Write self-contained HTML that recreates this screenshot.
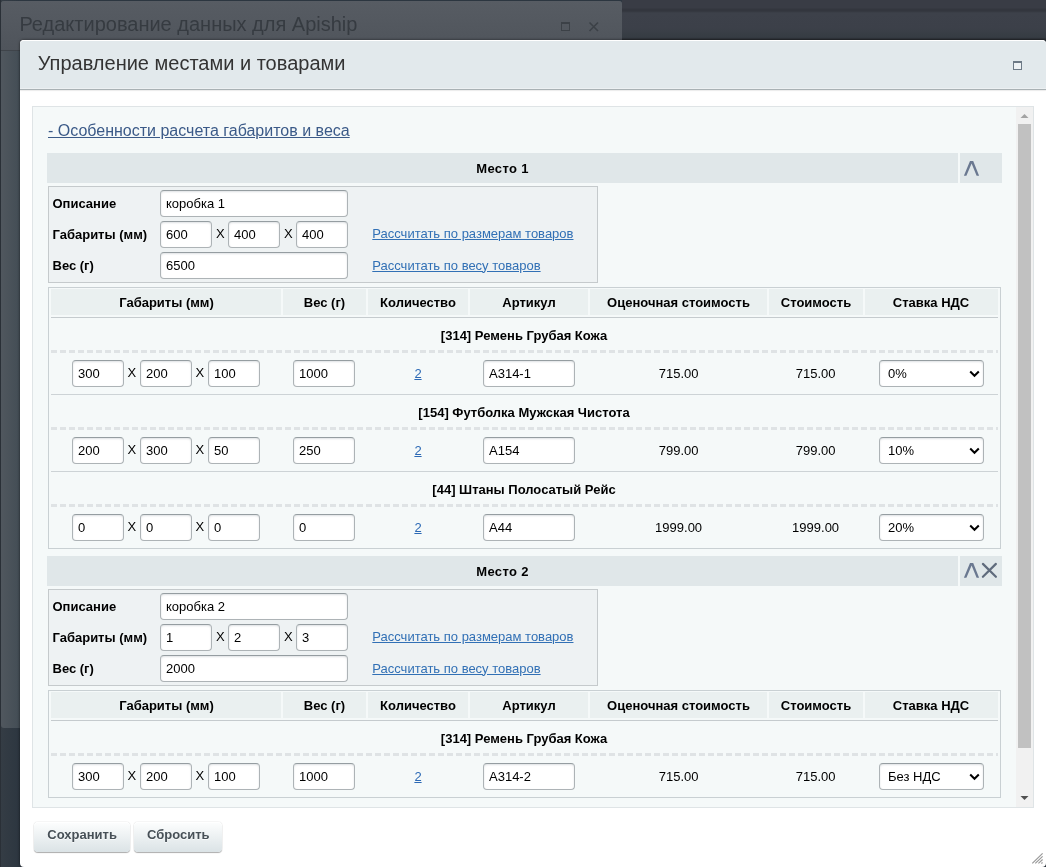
<!DOCTYPE html>
<html><head><meta charset="utf-8"><title>Управление местами и товарами</title>
<style>
*{margin:0;padding:0;box-sizing:border-box}
html,body{width:1046px;height:867px;overflow:hidden}
body{background:linear-gradient(90deg,#353d45,#2c3640 20px,#2c3640);font-family:"Liberation Sans",sans-serif;position:relative}
.abs{position:absolute}
.t{position:absolute;white-space:nowrap;line-height:1}
.b{font-weight:bold}
.inp{position:absolute;background:#fff;border:1px solid #adb3b6;border-top-color:#959da1;border-radius:4px;box-shadow:inset 0 1px 2px rgba(160,170,175,.35)}
.inp span{position:absolute;left:5px;font-size:13px;color:#000;line-height:1;white-space:nowrap}
.lnk{color:#2c69b5;text-decoration:underline}
.hdr{position:absolute;background:#e0e7e9}
.th{position:absolute;background:#e9eef0}
.dash{position:absolute;height:3px;background:repeating-linear-gradient(90deg,#dfe3e5 0 6px,transparent 6px 9px)}
.sep{position:absolute;height:1px;background:#cbd1d4}
.btn{position:absolute;border-radius:4px;background:linear-gradient(#fdfefe,#dbe3e6);box-shadow:0 0 1px rgba(0,0,0,.35),0 1px 1px rgba(0,0,0,.3),inset 0 1px 0 #fff}
.btn span{position:absolute;font-size:13px;font-weight:bold;color:#475057;text-shadow:0 1px rgba(255,255,255,.7);line-height:1;white-space:nowrap}
</style></head>
<body><div id="root" style="position:absolute;left:0;top:0;width:1046px;height:867px;will-change:transform">
<div class="abs" style="left:622px;top:0px;width:424px;height:40px;background:linear-gradient(#393c45 0,#393c45 8px,#33363e 9px,#33363e 11px,#3d414a 13px,#3c4049 28px,#383e45 34px,#363c43 38px,#2a2e33 39px,#2a2e33 40px)"></div>
<div class="abs" style="left:0px;top:0px;width:1px;height:867px;background:#2a3037"></div>
<div class="abs" style="left:1px;top:1px;width:621px;height:727px;background:linear-gradient(90deg,#50575e,#434d55 19px,#434d55);border-radius:3px;overflow:hidden"></div>
<div class="abs" style="left:1px;top:1px;width:621px;height:49px;background:linear-gradient(#575c63,#4f545b);border-radius:3px 3px 0 0"></div>
<div class="abs" style="left:1px;top:50px;width:621px;height:1px;background:#3f444a"></div>
<div class="t" style="left:19.4px;top:13.57px;font-size:20px;color:#363b41;">Редактирование данных для Apiship</div>
<svg class="abs" style="left:560px;top:21px" width="12" height="12"><rect x="1.5" y="1.5" width="8" height="8" fill="none" stroke="#3c4147" stroke-width="1"/><rect x="1" y="1" width="9" height="2" fill="#3c4147"/></svg>
<svg class="abs" style="left:588px;top:21px" width="12" height="12"><path d="M1.5 1.5L10 10M10 1.5L1.5 10" stroke="#3c4147" stroke-width="1.6"/></svg>
<div class="abs" style="left:20px;top:40px;width:1026px;height:827px;background:#fff;border-radius:4px;box-shadow:0 0 3px rgba(0,0,0,.6)"></div>
<div class="abs" style="left:20px;top:40px;width:1026px;height:50px;background:#e2e9ec;border-radius:4px 4px 0 0;border-top:1px solid #fff;border-bottom:1px solid #a9b1b4;box-shadow:0 1px 1px rgba(0,0,0,.08),inset 0 -1px 0 rgba(255,255,255,.35)"></div>
<div class="t" style="left:37.8px;top:52.67px;font-size:20px;color:#333;">Управление местами и товарами</div>
<svg class="abs" style="left:1013px;top:61px" width="9" height="9"><rect x="0.5" y="0.5" width="8" height="8" fill="#eef2f4" stroke="#6d7a86" stroke-width="1"/><rect x="0" y="0" width="9" height="2" fill="#6d7a86"/></svg>
<div class="abs" style="left:32px;top:106px;width:1002px;height:702px;background:#f5f9f9;border:1px solid #dfe4e6"></div>
<div class="abs" style="left:1016px;top:107px;width:17px;height:700px;background:#f1f1f1"></div>
<div class="abs" style="left:1018px;top:124px;width:13px;height:624px;background:#c1c1c1"></div>
<svg class="abs" style="left:1016px;top:107px" width="17" height="17"><path d="M4.5 11h8l-4-4z" fill="#a3a3a3"/></svg>
<svg class="abs" style="left:1016px;top:790px" width="17" height="17"><path d="M4.5 6h8l-4 4z" fill="#505050"/></svg>
<div class="t" style="left:48px;top:122.96px;font-size:16px;color:#3b5a88;text-decoration:underline;">- Особенности расчета габаритов и веса</div>
<div class="abs" style="left:47px;top:153px;width:911px;height:30px;background:#e0e7e9"></div>
<div class="abs" style="left:960px;top:153px;width:42px;height:30px;background:#e0e7e9"></div>
<div class="t" style="left:402.50px;width:200px;text-align:center;top:162.00px;font-size:13px;color:#000;font-weight:bold;letter-spacing:0.35px;">Место 1</div>
<svg class="abs" style="left:958px;top:156px" width="26" height="24"><path d="M5.9 19.8L12 4.9L15.2 4.9L21.1 19.8L18.6 19.8L13.6 7.5L8.4 19.8Z" fill="#6a7890"/></svg>
<div class="abs" style="left:48px;top:186px;width:550px;height:97px;background:#eef2f3;border:1px solid #c5cacc"></div>
<div class="t" style="left:52.5px;top:197.30px;font-size:13px;color:#000;font-weight:bold;">Описание</div>
<div class="t" style="left:52.5px;top:228.00px;font-size:13px;color:#000;font-weight:bold;">Габариты (мм)</div>
<div class="t" style="left:52.5px;top:259.10px;font-size:13px;color:#000;font-weight:bold;">Вес (г)</div>
<div class="inp" style="left:160px;top:190px;width:188px;height:27px"><span style="top:5.80px">коробка 1</span></div>
<div class="inp" style="left:160px;top:221px;width:52px;height:27px"><span style="top:5.80px">600</span></div>
<div class="t" style="left:216px;top:227.00px;font-size:13px;color:#000;">X</div>
<div class="inp" style="left:228px;top:221px;width:52px;height:27px"><span style="top:5.80px">400</span></div>
<div class="t" style="left:284px;top:227.00px;font-size:13px;color:#000;">X</div>
<div class="inp" style="left:296px;top:221px;width:52px;height:27px"><span style="top:5.80px">400</span></div>
<div class="inp" style="left:160px;top:252px;width:188px;height:27px"><span style="top:5.80px">6500</span></div>
<div class="t" style="left:372.3px;top:227.30px;font-size:13px;color:#3170b5;text-decoration:underline;">Рассчитать по размерам товаров</div>
<div class="t" style="left:372.3px;top:258.50px;font-size:13px;color:#3170b5;text-decoration:underline;">Рассчитать по весу товаров</div>
<div class="abs" style="left:48px;top:287px;width:953px;height:262px;background:#f5f9f9;border:1px solid #c9d0d3"></div>
<div class="abs" style="left:51px;top:289px;width:230px;height:26px;background:#eaf0f0"></div>
<div class="t" style="left:51.00px;width:231px;text-align:center;top:296.00px;font-size:13px;color:#000;font-weight:bold;">Габариты (мм)</div>
<div class="abs" style="left:283px;top:289px;width:83px;height:26px;background:#eaf0f0"></div>
<div class="t" style="left:282.00px;width:85px;text-align:center;top:296.00px;font-size:13px;color:#000;font-weight:bold;">Вес (г)</div>
<div class="abs" style="left:368px;top:289px;width:100px;height:26px;background:#eaf0f0"></div>
<div class="t" style="left:367.00px;width:102px;text-align:center;top:296.00px;font-size:13px;color:#000;font-weight:bold;">Количество</div>
<div class="abs" style="left:470px;top:289px;width:118px;height:26px;background:#eaf0f0"></div>
<div class="t" style="left:469.00px;width:120px;text-align:center;top:296.00px;font-size:13px;color:#000;font-weight:bold;">Артикул</div>
<div class="abs" style="left:590px;top:289px;width:177px;height:26px;background:#eaf0f0"></div>
<div class="t" style="left:589.00px;width:179px;text-align:center;top:296.00px;font-size:13px;color:#000;font-weight:bold;">Оценочная стоимость</div>
<div class="abs" style="left:769px;top:289px;width:94px;height:26px;background:#eaf0f0"></div>
<div class="t" style="left:768.00px;width:96px;text-align:center;top:296.00px;font-size:13px;color:#000;font-weight:bold;">Стоимость</div>
<div class="abs" style="left:865px;top:289px;width:133px;height:26px;background:#eaf0f0"></div>
<div class="t" style="left:864.00px;width:134px;text-align:center;top:296.00px;font-size:13px;color:#000;font-weight:bold;">Ставка НДС</div>
<div class="abs" style="left:51px;top:317px;width:947px;height:1px;background:#c5cbce"></div>
<div class="t" style="left:224.00px;width:600px;text-align:center;top:329.20px;font-size:13px;color:#000;font-weight:bold;">[314] Ремень Грубая Кожа</div>
<div class="dash" style="left:51px;top:350px;width:947px"></div>
<div class="inp" style="left:72px;top:360px;width:52px;height:27px"><span style="top:5.80px">300</span></div>
<div class="t" style="left:127.5px;top:366.00px;font-size:13px;color:#000;">X</div>
<div class="inp" style="left:140px;top:360px;width:52px;height:27px"><span style="top:5.80px">200</span></div>
<div class="t" style="left:195.5px;top:366.00px;font-size:13px;color:#000;">X</div>
<div class="inp" style="left:208px;top:360px;width:52px;height:27px"><span style="top:5.80px">100</span></div>
<div class="inp" style="left:293px;top:360px;width:62px;height:27px"><span style="top:5.80px">1000</span></div>
<div class="t" style="left:398.00px;width:40px;text-align:center;top:367.00px;font-size:13px;color:#2c69b5;text-decoration:underline;">2</div>
<div class="inp" style="left:483px;top:360px;width:92px;height:27px"><span style="top:5.80px">A314-1</span></div>
<div class="t" style="left:618.60px;width:120px;text-align:center;top:367.00px;font-size:13px;color:#000;">715.00</div>
<div class="t" style="left:770.60px;width:90px;text-align:center;top:367.00px;font-size:13px;color:#000;">715.00</div>
<div class="inp" style="left:879px;top:360px;width:105px;height:27px"><span style="top:6.30px;left:8px">0%</span><svg style="position:absolute;left:89px;top:9px" width="11" height="8"><path d="M1.2 1.5L5.5 5.8L9.8 1.5" fill="none" stroke="#000" stroke-width="2"/></svg></div>
<div class="abs" style="left:51px;top:394px;width:947px;height:1px;background:#cdd3d6"></div>
<div class="t" style="left:224.00px;width:600px;text-align:center;top:406.20px;font-size:13px;color:#000;font-weight:bold;">[154] Футболка Мужская Чистота</div>
<div class="dash" style="left:51px;top:427px;width:947px"></div>
<div class="inp" style="left:72px;top:437px;width:52px;height:27px"><span style="top:5.80px">200</span></div>
<div class="t" style="left:127.5px;top:443.00px;font-size:13px;color:#000;">X</div>
<div class="inp" style="left:140px;top:437px;width:52px;height:27px"><span style="top:5.80px">300</span></div>
<div class="t" style="left:195.5px;top:443.00px;font-size:13px;color:#000;">X</div>
<div class="inp" style="left:208px;top:437px;width:52px;height:27px"><span style="top:5.80px">50</span></div>
<div class="inp" style="left:293px;top:437px;width:62px;height:27px"><span style="top:5.80px">250</span></div>
<div class="t" style="left:398.00px;width:40px;text-align:center;top:444.00px;font-size:13px;color:#2c69b5;text-decoration:underline;">2</div>
<div class="inp" style="left:483px;top:437px;width:92px;height:27px"><span style="top:5.80px">A154</span></div>
<div class="t" style="left:618.60px;width:120px;text-align:center;top:444.00px;font-size:13px;color:#000;">799.00</div>
<div class="t" style="left:770.60px;width:90px;text-align:center;top:444.00px;font-size:13px;color:#000;">799.00</div>
<div class="inp" style="left:879px;top:437px;width:105px;height:27px"><span style="top:6.30px;left:8px">10%</span><svg style="position:absolute;left:89px;top:9px" width="11" height="8"><path d="M1.2 1.5L5.5 5.8L9.8 1.5" fill="none" stroke="#000" stroke-width="2"/></svg></div>
<div class="abs" style="left:51px;top:471px;width:947px;height:1px;background:#cdd3d6"></div>
<div class="t" style="left:224.00px;width:600px;text-align:center;top:483.20px;font-size:13px;color:#000;font-weight:bold;">[44] Штаны Полосатый Рейс</div>
<div class="dash" style="left:51px;top:504px;width:947px"></div>
<div class="inp" style="left:72px;top:514px;width:52px;height:27px"><span style="top:5.80px">0</span></div>
<div class="t" style="left:127.5px;top:520.00px;font-size:13px;color:#000;">X</div>
<div class="inp" style="left:140px;top:514px;width:52px;height:27px"><span style="top:5.80px">0</span></div>
<div class="t" style="left:195.5px;top:520.00px;font-size:13px;color:#000;">X</div>
<div class="inp" style="left:208px;top:514px;width:52px;height:27px"><span style="top:5.80px">0</span></div>
<div class="inp" style="left:293px;top:514px;width:62px;height:27px"><span style="top:5.80px">0</span></div>
<div class="t" style="left:398.00px;width:40px;text-align:center;top:521.00px;font-size:13px;color:#2c69b5;text-decoration:underline;">2</div>
<div class="inp" style="left:483px;top:514px;width:92px;height:27px"><span style="top:5.80px">A44</span></div>
<div class="t" style="left:618.60px;width:120px;text-align:center;top:521.00px;font-size:13px;color:#000;">1999.00</div>
<div class="t" style="left:770.60px;width:90px;text-align:center;top:521.00px;font-size:13px;color:#000;">1999.00</div>
<div class="inp" style="left:879px;top:514px;width:105px;height:27px"><span style="top:6.30px;left:8px">20%</span><svg style="position:absolute;left:89px;top:9px" width="11" height="8"><path d="M1.2 1.5L5.5 5.8L9.8 1.5" fill="none" stroke="#000" stroke-width="2"/></svg></div>
<div class="abs" style="left:47px;top:556px;width:911px;height:30px;background:#e0e7e9"></div>
<div class="abs" style="left:960px;top:556px;width:42px;height:30px;background:#e0e7e9"></div>
<div class="t" style="left:402.50px;width:200px;text-align:center;top:565.00px;font-size:13px;color:#000;font-weight:bold;letter-spacing:0.35px;">Место 2</div>
<svg class="abs" style="left:958px;top:558px" width="26" height="24"><path d="M5.9 19.8L12 4.9L15.2 4.9L21.1 19.8L18.6 19.8L13.6 7.5L8.4 19.8Z" fill="#6a7890"/></svg>
<svg class="abs" style="left:976px;top:558px" width="26" height="24"><path d="M6.9 5.9L19.9 18.8M19.9 5.9L6.9 18.8" fill="none" stroke="#5f6b7c" stroke-width="2.2" stroke-linecap="round"/></svg>
<div class="abs" style="left:48px;top:589px;width:550px;height:97px;background:#eef2f3;border:1px solid #c5cacc"></div>
<div class="t" style="left:52.5px;top:600.30px;font-size:13px;color:#000;font-weight:bold;">Описание</div>
<div class="t" style="left:52.5px;top:631.00px;font-size:13px;color:#000;font-weight:bold;">Габариты (мм)</div>
<div class="t" style="left:52.5px;top:662.10px;font-size:13px;color:#000;font-weight:bold;">Вес (г)</div>
<div class="inp" style="left:160px;top:593px;width:188px;height:27px"><span style="top:5.80px">коробка 2</span></div>
<div class="inp" style="left:160px;top:624px;width:52px;height:27px"><span style="top:5.80px">1</span></div>
<div class="t" style="left:216px;top:630.00px;font-size:13px;color:#000;">X</div>
<div class="inp" style="left:228px;top:624px;width:52px;height:27px"><span style="top:5.80px">2</span></div>
<div class="t" style="left:284px;top:630.00px;font-size:13px;color:#000;">X</div>
<div class="inp" style="left:296px;top:624px;width:52px;height:27px"><span style="top:5.80px">3</span></div>
<div class="inp" style="left:160px;top:655px;width:188px;height:27px"><span style="top:5.80px">2000</span></div>
<div class="t" style="left:372.3px;top:630.30px;font-size:13px;color:#3170b5;text-decoration:underline;">Рассчитать по размерам товаров</div>
<div class="t" style="left:372.3px;top:661.50px;font-size:13px;color:#3170b5;text-decoration:underline;">Рассчитать по весу товаров</div>
<div class="abs" style="left:48px;top:690px;width:953px;height:108px;background:#f5f9f9;border:1px solid #c9d0d3"></div>
<div class="abs" style="left:51px;top:692px;width:230px;height:26px;background:#eaf0f0"></div>
<div class="t" style="left:51.00px;width:231px;text-align:center;top:699.00px;font-size:13px;color:#000;font-weight:bold;">Габариты (мм)</div>
<div class="abs" style="left:283px;top:692px;width:83px;height:26px;background:#eaf0f0"></div>
<div class="t" style="left:282.00px;width:85px;text-align:center;top:699.00px;font-size:13px;color:#000;font-weight:bold;">Вес (г)</div>
<div class="abs" style="left:368px;top:692px;width:100px;height:26px;background:#eaf0f0"></div>
<div class="t" style="left:367.00px;width:102px;text-align:center;top:699.00px;font-size:13px;color:#000;font-weight:bold;">Количество</div>
<div class="abs" style="left:470px;top:692px;width:118px;height:26px;background:#eaf0f0"></div>
<div class="t" style="left:469.00px;width:120px;text-align:center;top:699.00px;font-size:13px;color:#000;font-weight:bold;">Артикул</div>
<div class="abs" style="left:590px;top:692px;width:177px;height:26px;background:#eaf0f0"></div>
<div class="t" style="left:589.00px;width:179px;text-align:center;top:699.00px;font-size:13px;color:#000;font-weight:bold;">Оценочная стоимость</div>
<div class="abs" style="left:769px;top:692px;width:94px;height:26px;background:#eaf0f0"></div>
<div class="t" style="left:768.00px;width:96px;text-align:center;top:699.00px;font-size:13px;color:#000;font-weight:bold;">Стоимость</div>
<div class="abs" style="left:865px;top:692px;width:133px;height:26px;background:#eaf0f0"></div>
<div class="t" style="left:864.00px;width:134px;text-align:center;top:699.00px;font-size:13px;color:#000;font-weight:bold;">Ставка НДС</div>
<div class="abs" style="left:51px;top:720px;width:947px;height:1px;background:#c5cbce"></div>
<div class="t" style="left:224.00px;width:600px;text-align:center;top:732.20px;font-size:13px;color:#000;font-weight:bold;">[314] Ремень Грубая Кожа</div>
<div class="dash" style="left:51px;top:753px;width:947px"></div>
<div class="inp" style="left:72px;top:763px;width:52px;height:27px"><span style="top:5.80px">300</span></div>
<div class="t" style="left:127.5px;top:769.00px;font-size:13px;color:#000;">X</div>
<div class="inp" style="left:140px;top:763px;width:52px;height:27px"><span style="top:5.80px">200</span></div>
<div class="t" style="left:195.5px;top:769.00px;font-size:13px;color:#000;">X</div>
<div class="inp" style="left:208px;top:763px;width:52px;height:27px"><span style="top:5.80px">100</span></div>
<div class="inp" style="left:293px;top:763px;width:62px;height:27px"><span style="top:5.80px">1000</span></div>
<div class="t" style="left:398.00px;width:40px;text-align:center;top:770.00px;font-size:13px;color:#2c69b5;text-decoration:underline;">2</div>
<div class="inp" style="left:483px;top:763px;width:92px;height:27px"><span style="top:5.80px">A314-2</span></div>
<div class="t" style="left:618.60px;width:120px;text-align:center;top:770.00px;font-size:13px;color:#000;">715.00</div>
<div class="t" style="left:770.60px;width:90px;text-align:center;top:770.00px;font-size:13px;color:#000;">715.00</div>
<div class="inp" style="left:879px;top:763px;width:105px;height:27px"><span style="top:6.30px;left:8px">Без НДС</span><svg style="position:absolute;left:89px;top:9px" width="11" height="8"><path d="M1.2 1.5L5.5 5.8L9.8 1.5" fill="none" stroke="#000" stroke-width="2"/></svg></div>
<div class="btn" style="left:34px;top:822px;width:96px;height:30px"><span style="left:13.3px;top:6px">Сохранить</span></div>
<div class="btn" style="left:134px;top:822px;width:88px;height:30px"><span style="left:13px;top:6px">Сбросить</span></div>
<svg class="abs" style="left:1030px;top:850px" width="16" height="17"><path d="M2.3 13.4L12.6 3.4M5.3 13.4L12.6 6.4M8.4 13.4L12.6 9.5M11.3 13.4L12.6 12.4" stroke="#9a9a9a" stroke-width="1.2"/></svg>
</div></body></html>
